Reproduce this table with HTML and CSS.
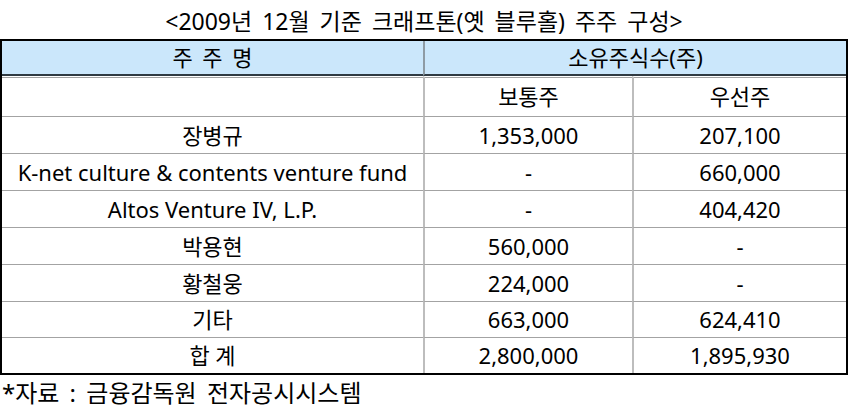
FILE: index.html
```html
<!DOCTYPE html>
<html lang="ko">
<head>
<meta charset="utf-8">
<link rel="stylesheet" href="styles.css">
</head>
<body>
<div class="title">&lt;2009년 12월 기준 크래프톤(옛 블루홀) 주주 구성&gt;</div>
<table class="grid">
  <colgroup>
    <col class="c-name">
    <col class="c-common">
    <col class="c-pref">
  </colgroup>
  <thead>
    <tr class="head">
      <th>주 주 명</th>
      <th colspan="2" class="divl">소유주식수(주)</th>
    </tr>
  </thead>
  <tbody>
    <tr class="sub">
      <td></td>
      <td class="divl">보통주</td>
      <td class="divl">우선주</td>
    </tr>
    <tr><td>장병규</td><td class="divl">1,353,000</td><td class="divl">207,100</td></tr>
    <tr><td>K-net culture &amp; contents venture fund</td><td class="divl">-</td><td class="divl">660,000</td></tr>
    <tr><td>Altos Venture IV, L.P.</td><td class="divl">-</td><td class="divl">404,420</td></tr>
    <tr><td>박용현</td><td class="divl">560,000</td><td class="divl">-</td></tr>
    <tr><td>황철웅</td><td class="divl">224,000</td><td class="divl">-</td></tr>
    <tr class="short"><td>기타</td><td class="divl">663,000</td><td class="divl">624,410</td></tr>
    <tr class="short"><td>합 계</td><td class="divl">2,800,000</td><td class="divl">1,895,930</td></tr>
  </tbody>
</table>
<div class="note">*자료 : 금융감독원 전자공시시스템</div>
</body>
</html>
```
FILE: styles.css
```css
html, body {
  margin: 0;
  padding: 0;
  background: #fff;
}
body {
  width: 851px;
  font-family: "Noto Sans", "Noto Sans CJK KR", sans-serif;
  color: #000;
}
.title {
  width: 848px;
  height: 39px;
  line-height: 43px;
  text-align: center;
  font-size: 23px;
  word-spacing: 4px;
  overflow: visible;
}
.grid {
  width: 848px;
  border-collapse: separate;
  border-spacing: 0;
  border: 2px solid #000;
  table-layout: fixed;
  font-size: 22px;
}
.c-name { width: 421px; }
.c-common { width: 209px; }
.grid th,
.grid td {
  padding: 0;
  text-align: center;
  vertical-align: middle;
  font-weight: normal;
  white-space: nowrap;
}
.grid td.divl {
  border-left: 2px solid #bdbdbd;
}
.head th {
  background: #cbe7fb;
  line-height: 33px;
  border-bottom: 2px solid #2f3a42;
  word-spacing: 4px;
}
.head th.divl {
  border-left: 2px solid #8e9ba4;
}
.grid tbody td {
  border-top: 1px solid #a3a3a3;
  line-height: 36px;
}
.grid tbody tr.short td {
  line-height: 35px;
}
.grid tbody tr.sub td {
  border-top: 1px solid #fff;
  box-shadow: inset 0 1px 0 #a3a3a3;
  line-height: 39px;
}
.note {
  height: 43px;
  line-height: 36px;
  padding-left: 2px;
  font-size: 24px;
  word-spacing: 4px;
}
```
